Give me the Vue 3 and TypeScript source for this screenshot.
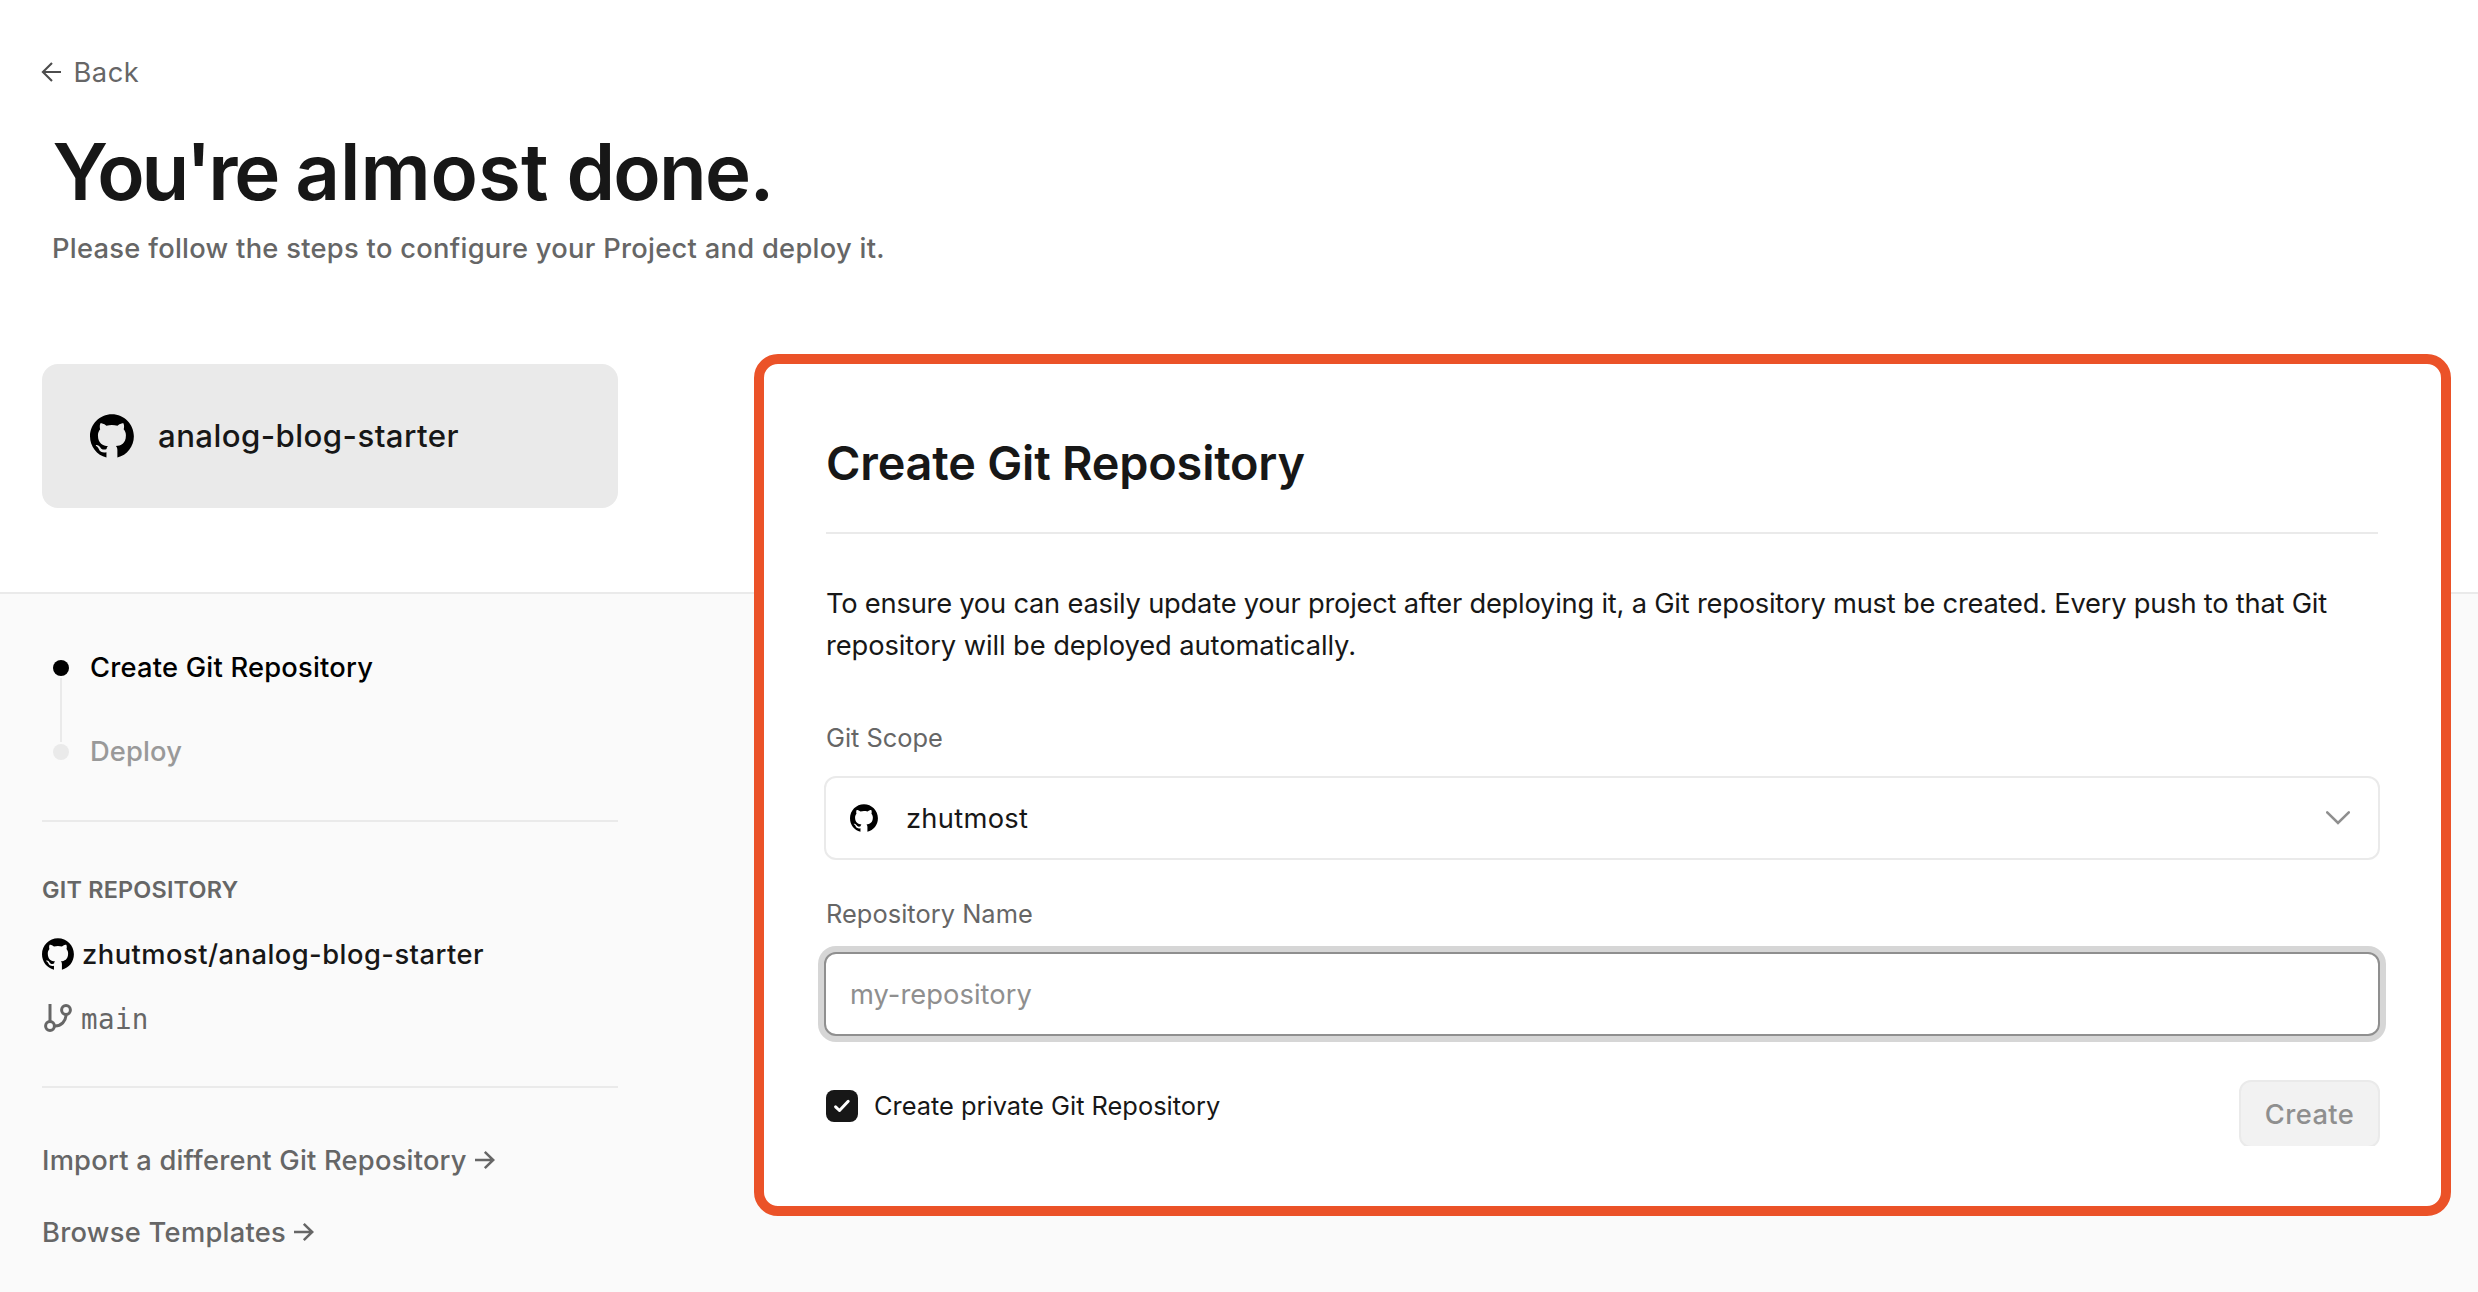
<script setup lang="ts">
import { ref, h, type FunctionalComponent } from 'vue'

const GITHUB_PATH =
  'M48.854 0C21.839 0 0 22 0 49.217 0 72 15.1 91.3 36.64 96.6V84.418c-13.59 2.934-16.42-5.867-16.42-5.867-2.184-5.704-5.42-7.17-5.42-7.17-4.448-3.015.324-3.015.324-3.015 4.934.326 7.523 5.052 7.523 5.052 4.367 7.496 11.404 5.378 14.235 4.074.404-3.178 1.699-5.378 3.074-6.6-10.839-1.141-22.243-5.378-22.243-24.283 0-5.378 1.94-9.778 5.014-13.2-.485-1.222-2.184-6.275.486-13.038 0 0 4.125-1.304 13.426 5.052a46.97 46.97 0 0 1 12.214-1.63c4.125 0 8.33.571 12.213 1.63 9.302-6.356 13.427-5.052 13.427-5.052 2.67 6.763.97 11.816.485 13.038 3.155 3.422 5.015 7.822 5.015 13.2 0 18.905-11.404 23.06-22.324 24.283 1.78 1.548 3.316 4.481 3.316 9.126V96.6C82.6 91.3 97.707 72 97.707 49.217 97.707 22 75.788 0 48.854 0z'

const GithubIcon: FunctionalComponent<{ size: number }> = (props) =>
  h(
    'svg',
    { width: props.size, height: props.size, viewBox: '0 0 98 97', fill: '#000', style: { flex: 'none' } },
    [h('path', { d: GITHUB_PATH })],
  )
GithubIcon.props = ['size']

const links = [
  { label: 'Import a different Git Repository', spacing: 'normal' },
  { label: 'Browse Templates', spacing: 'wide' },
]

const repositoryName = ref('')
const isPrivate = ref(true)
</script>

<template>
  <main class="page">
    <header class="intro">
      <a class="back">
        <svg width="20" height="20" viewBox="0 0 20 20" fill="none" stroke="#4d4d4d" stroke-width="2.1">
          <path d="M20 10H2M11 .9 1.9 10l9.1 9.1" />
        </svg>
        <span>Back</span>
      </a>
      <h1><span class="tight">You're</span> <span class="loose">almost</span> done.</h1>
      <p>Please follow the steps to configure your Project and deploy it.</p>
    </header>

    <div class="columns">
      <aside class="sidebar">
        <div class="project">
          <GithubIcon :size="44" />
          <span>analog-blog-starter</span>
        </div>

        <div class="steps">
          <div class="rail">
            <i class="dot active"></i>
            <i class="line"></i>
            <i class="dot"></i>
          </div>
          <div class="labels">
            <span class="current">Create Git Repository</span>
            <span class="pending">Deploy</span>
          </div>
        </div>

        <section class="repo">
          <h3>GIT REPOSITORY</h3>
          <div class="repo-name">
            <GithubIcon :size="32" />
            <span>zhutmost/analog-blog-starter</span>
          </div>
          <div class="branch">
            <svg width="28" height="28" viewBox="0 0 28 28" fill="none" stroke="#666" stroke-width="3">
              <path d="M6 0v17" />
              <circle cx="6" cy="22" r="4.4" />
              <circle cx="22" cy="6" r="4.4" />
              <path d="M11 22c6 0 11-4.5 11-11.5" />
            </svg>
            <span>main</span>
          </div>
        </section>

        <nav class="links">
          <a v-for="link in links" :key="link.label" :class="link.spacing">
            <span>{{ link.label }}</span>
            <svg width="20" height="18" viewBox="0 0 20 18" fill="none" stroke="#666" stroke-width="2.5">
              <path d="M0 9h18M9.8.9 18.2 9l-8.4 8.1" />
            </svg>
          </a>
        </nav>
      </aside>

      <section class="card">
        <h2>Create Git Repository</h2>
        <hr />
        <p class="description">
          <span class="first">To ensure you can easily update your project after deploying it, a Git repository must be created. Every push to that Git</span>
          <span class="second">repository will be deployed automatically.</span>
        </p>

        <label class="field-label">Git Scope</label>
        <div class="select">
          <GithubIcon :size="28" />
          <span>zhutmost</span>
          <svg width="24" height="14" viewBox="0 0 24 14" fill="none" stroke="#8f8f8f" stroke-width="2.6">
            <path d="M1.2 1.4 12 12 22.8 1.4" stroke-linecap="round" />
          </svg>
        </div>

        <label class="field-label" for="repository-name">Repository Name</label>
        <input id="repository-name" v-model="repositoryName" class="input" placeholder="my-repository" />

        <div class="actions">
          <label class="private" @click="isPrivate = !isPrivate">
            <span class="checkbox">
              <svg v-if="isPrivate" width="32" height="32" viewBox="0 0 32 32" fill="none" stroke="#fff" stroke-width="3" stroke-linecap="round" stroke-linejoin="round">
                <path d="M9.6 16.8 13.5 20.5 22.2 11.3" />
              </svg>
            </span>
            <span>Create private Git Repository</span>
          </label>
          <div class="button-clip">
            <button type="button" disabled>Create</button>
          </div>
        </div>
      </section>
    </div>
  </main>
</template>

<style>
body {
  margin: 0;
  background: #fafafa;
}
</style>

<style scoped>
* {
  box-sizing: border-box;
  margin: 0;
}

.page {
  width: 2478px;
  height: 1292px;
  overflow: hidden;
  font-family: Inter, "Liberation Sans", sans-serif;
  font-size: 27.3px;
  color: #171717;
  background: linear-gradient(#fff 592px, #eaeaea 592px, #eaeaea 594px, #fafafa 594px);
}

.page span,
.page h1,
.page p {
  white-space: nowrap;
}

.intro {
  height: 354px;
  padding-top: 51px;
}

.back {
  display: flex;
  align-items: center;
  gap: 13px;
  margin-left: 40.5px;
  line-height: 40px;
  letter-spacing: 0.5px;
  color: #666;
}

.back span {
  padding-top: 2px;
}

.intro h1 {
  margin: 39px 0 0 52.5px;
  font-size: 78px;
  font-weight: 600;
  line-height: 80px;
  letter-spacing: -1.756px;
}

.intro h1 .tight {
  letter-spacing: -3.2px;
}

.intro h1 .loose {
  letter-spacing: 0;
}

.intro p {
  margin: 17px 0 0 52px;
  font-weight: 500;
  line-height: 40px;
  letter-spacing: 0.288px;
  color: #666;
}

.columns {
  display: flex;
  align-items: flex-start;
}

.sidebar {
  width: 576px;
  margin: 10px 136px 0 42px;
}

.project {
  display: flex;
  align-items: center;
  gap: 24px;
  height: 144px;
  padding-left: 48px;
  border-radius: 16px;
  background: #eaeaea;
  font-size: 31.2px;
  font-weight: 500;
  letter-spacing: 0.426px;
}

.steps {
  display: flex;
  gap: 21px;
  height: 312px;
  padding: 140px 0 0 11px;
}

.rail {
  display: flex;
  flex-direction: column;
  align-items: center;
  gap: 2px;
  padding-top: 12px;
}

.dot {
  width: 16px;
  height: 16px;
  border-radius: 50%;
  background: #eaeaea;
}

.dot.active {
  background: #000;
}

.line {
  width: 2px;
  height: 64px;
  background: #eaeaea;
}

.labels {
  display: flex;
  flex-direction: column;
  gap: 44px;
  font-weight: 500;
  line-height: 40px;
}

.current {
  color: #000;
  letter-spacing: 0.22px;
}

.pending {
  color: #999;
  letter-spacing: 0.15px;
}

.repo {
  height: 268px;
  padding-top: 52px;
  border: solid #eaeaea;
  border-width: 2px 0;
}

.repo h3 {
  font-size: 23.4px;
  font-weight: 600;
  line-height: 32px;
  letter-spacing: 0.21px;
  color: #666;
}

.repo-name {
  display: flex;
  align-items: center;
  gap: 8px;
  height: 40px;
  margin-top: 28px;
  font-weight: 500;
  letter-spacing: 0.481px;
}

.repo-name span {
  padding-top: 1px;
}

.branch {
  display: flex;
  align-items: center;
  gap: 9px;
  height: 40px;
  margin-top: 24px;
  padding-left: 2px;
  color: #666;
}

.branch span {
  padding-top: 1px;
  font-family: "DejaVu Sans Mono", "Liberation Mono", monospace;
  font-size: 27.5px;
  letter-spacing: 0.4px;
}

.links {
  display: flex;
  flex-direction: column;
  gap: 30px;
  padding-top: 51px;
}

.links a {
  display: flex;
  align-items: center;
  gap: 8px;
  font-weight: 500;
  line-height: 40px;
  letter-spacing: 0.22px;
  color: #666;
}

.links a.wide {
  letter-spacing: 0.28px;
}

.links span {
  padding-top: 2px;
}

.card {
  width: 1697px;
  height: 862px;
  padding: 69px 61px 0 60px;
  border: 10px solid #eb5228;
  border-radius: 24px;
  background: #fff;
}

.card h2 {
  margin-left: 2px;
  font-size: 46.8px;
  font-weight: 600;
  line-height: 60px;
  letter-spacing: -0.19px;
}

.card hr {
  height: 2px;
  margin: 39px 2px 49px;
  border: 0;
  background: #eaeaea;
}

.description {
  margin-left: 2px;
  line-height: 42px;
}

.description span {
  display: block;
}

.description .first {
  letter-spacing: -0.225px;
}

.description .second {
  letter-spacing: -0.085px;
}

.field-label {
  display: block;
  margin: 53px 0 20px 2px;
  font-size: 25.4px;
  line-height: 36px;
  color: #666;
}

.select {
  display: flex;
  align-items: center;
  height: 84px;
  padding: 0 28px 0 24px;
  border: 2px solid #eaeaea;
  border-radius: 12px;
}

.select span {
  flex: 1;
  margin-left: 28px;
  padding-top: 1px;
  letter-spacing: 0.289px;
}

.select + .field-label {
  margin-top: 36px;
  letter-spacing: 0.04px;
}

.input {
  display: block;
  width: 100%;
  height: 84px;
  padding: 1px 23px 0 24px;
  border: 2px solid #8f8f8f;
  border-radius: 12px;
  outline: 0;
  box-shadow: 0 0 0 6px #d6d6d6;
  background: #fff;
  font: inherit;
  letter-spacing: 0.05px;
}

.input::placeholder {
  color: #8f8f8f;
  opacity: 1;
}

.actions {
  display: flex;
  align-items: flex-start;
  justify-content: space-between;
  margin-top: 44px;
}

.private {
  display: flex;
  align-items: center;
  gap: 16px;
  padding: 10px 0 0 2px;
  font-size: 25.4px;
  line-height: 32px;
}

.checkbox {
  width: 32px;
  height: 32px;
  border-radius: 8px;
  background: #171717;
}

.checkbox svg {
  display: block;
}

.button-clip {
  height: 66px;
  overflow: hidden;
}

.button-clip button {
  display: block;
  width: 141px;
  height: 68px;
  padding: 1px 0 0;
  border: 2px solid #eaeaea;
  border-radius: 12px;
  background: #f2f2f2;
  font: inherit;
  font-weight: 500;
  letter-spacing: 0.424px;
  color: #8f8f8f;
}
</style>
